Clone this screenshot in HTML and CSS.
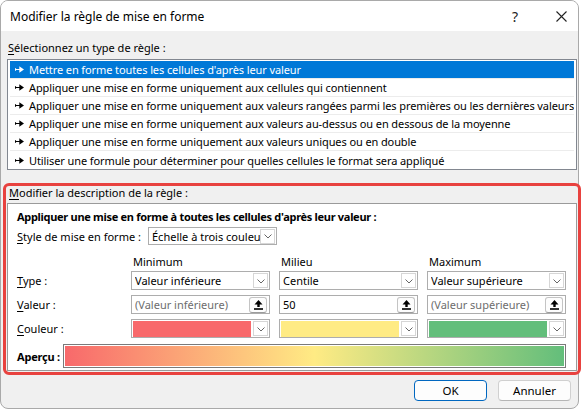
FILE: index.html
```html
<!DOCTYPE html>
<html lang="fr">
<head>
<meta charset="utf-8">
<title>Modifier la règle de mise en forme</title>
<link rel="stylesheet" href="styles.css">
</head>
<body>
<div class="window">
  <div class="titlebar">
    <span class="title">Modifier la règle de mise en forme</span>
    <span class="tb-help">?</span>
    <span class="tb-close"><svg width="11" height="11" viewBox="0 0 11 11"><path d="M0.5 0.5L10.5 10.5M10.5 0.5L0.5 10.5" stroke="#222" stroke-width="1.1" fill="none"/></svg></span>
  </div>
  <div class="content">
    <div class="label1"><u>S</u>électionnez un type de règle :</div>
    <ul class="listbox">
      <li class="rule selected"><svg class="bullet" width="9" height="7" viewBox="0 0 9 7"><path d="M0.5 2.2V4.8M0.5 3.5H5" stroke="currentColor" stroke-width="1.1" fill="none"/><path d="M4.3 0.3L9 3.5L4.3 6.7Z" fill="currentColor"/></svg>Mettre en forme toutes les cellules d'après leur valeur</li>
      <li class="rule"><svg class="bullet" width="9" height="7" viewBox="0 0 9 7"><path d="M0.5 2.2V4.8M0.5 3.5H5" stroke="currentColor" stroke-width="1.1" fill="none"/><path d="M4.3 0.3L9 3.5L4.3 6.7Z" fill="currentColor"/></svg>Appliquer une mise en forme uniquement aux cellules qui contiennent</li>
      <li class="rule"><svg class="bullet" width="9" height="7" viewBox="0 0 9 7"><path d="M0.5 2.2V4.8M0.5 3.5H5" stroke="currentColor" stroke-width="1.1" fill="none"/><path d="M4.3 0.3L9 3.5L4.3 6.7Z" fill="currentColor"/></svg>Appliquer une mise en forme uniquement aux valeurs rangées parmi les premières ou les dernières valeurs</li>
      <li class="rule"><svg class="bullet" width="9" height="7" viewBox="0 0 9 7"><path d="M0.5 2.2V4.8M0.5 3.5H5" stroke="currentColor" stroke-width="1.1" fill="none"/><path d="M4.3 0.3L9 3.5L4.3 6.7Z" fill="currentColor"/></svg>Appliquer une mise en forme uniquement aux valeurs au-dessus ou en dessous de la moyenne</li>
      <li class="rule"><svg class="bullet" width="9" height="7" viewBox="0 0 9 7"><path d="M0.5 2.2V4.8M0.5 3.5H5" stroke="currentColor" stroke-width="1.1" fill="none"/><path d="M4.3 0.3L9 3.5L4.3 6.7Z" fill="currentColor"/></svg>Appliquer une mise en forme uniquement aux valeurs uniques ou en double</li>
      <li class="rule"><svg class="bullet" width="9" height="7" viewBox="0 0 9 7"><path d="M0.5 2.2V4.8M0.5 3.5H5" stroke="currentColor" stroke-width="1.1" fill="none"/><path d="M4.3 0.3L9 3.5L4.3 6.7Z" fill="currentColor"/></svg>Utiliser une formule pour déterminer pour quelles cellules le format sera appliqué</li>
    </ul>
    <div class="desc">
      <div class="label2"><u>M</u>odifier la description de la règle :</div>
      <div class="panel">
        <div class="heading">Appliquer une mise en forme à toutes les cellules d'après leur valeur :</div>
        <div class="style-row">
          <span class="style-label"><u>S</u>tyle de mise en forme :</span>
          <div class="combo style-combo"><span class="combo-text">Échelle à trois couleurs</span><span class="arrow-btn"><svg width="8" height="5" viewBox="0 0 8 5"><path d="M0.5 0.5L4 4L7.5 0.5" stroke="#666" fill="none"/></svg></span></div>
        </div>
        <div class="grid">
          <span></span>
          <span class="col-head">Minimum</span>
          <span class="col-head">Milieu</span>
          <span class="col-head">Maximum</span>

          <span class="row-label"><u>T</u>ype :</span>
          <div class="combo"><span class="combo-text">Valeur inférieure</span><span class="arrow-btn"><svg width="8" height="5" viewBox="0 0 8 5"><path d="M0.5 0.5L4 4L7.5 0.5" stroke="#666" fill="none"/></svg></span></div>
          <div class="combo"><span class="combo-text">Centile</span><span class="arrow-btn"><svg width="8" height="5" viewBox="0 0 8 5"><path d="M0.5 0.5L4 4L7.5 0.5" stroke="#666" fill="none"/></svg></span></div>
          <div class="combo"><span class="combo-text">Valeur supérieure</span><span class="arrow-btn"><svg width="8" height="5" viewBox="0 0 8 5"><path d="M0.5 0.5L4 4L7.5 0.5" stroke="#666" fill="none"/></svg></span></div>

          <span class="row-label"><u>V</u>aleur :</span>
          <div class="combo"><span class="combo-text placeholder">(Valeur inférieure)</span><span class="ref-btn"><svg width="9" height="10" viewBox="0 0 9 10"><path d="M4.5 0L8.5 4.5H5.7V7H3.3V4.5H0.5Z" fill="#000"/><rect x="0" y="8.2" width="9" height="1.6" fill="#000"/></svg></span></div>
          <div class="combo"><span class="combo-text">50</span><span class="ref-btn"><svg width="9" height="10" viewBox="0 0 9 10"><path d="M4.5 0L8.5 4.5H5.7V7H3.3V4.5H0.5Z" fill="#000"/><rect x="0" y="8.2" width="9" height="1.6" fill="#000"/></svg></span></div>
          <div class="combo"><span class="combo-text placeholder">(Valeur supérieure)</span><span class="ref-btn"><svg width="9" height="10" viewBox="0 0 9 10"><path d="M4.5 0L8.5 4.5H5.7V7H3.3V4.5H0.5Z" fill="#000"/><rect x="0" y="8.2" width="9" height="1.6" fill="#000"/></svg></span></div>

          <span class="row-label"><u>C</u>ouleur :</span>
          <div class="combo color-combo"><span class="swatch red"></span><span class="arrow-btn"><svg width="8" height="5" viewBox="0 0 8 5"><path d="M0.5 0.5L4 4L7.5 0.5" stroke="#666" fill="none"/></svg></span></div>
          <div class="combo color-combo"><span class="swatch yellow"></span><span class="arrow-btn"><svg width="8" height="5" viewBox="0 0 8 5"><path d="M0.5 0.5L4 4L7.5 0.5" stroke="#666" fill="none"/></svg></span></div>
          <div class="combo color-combo"><span class="swatch green"></span><span class="arrow-btn"><svg width="8" height="5" viewBox="0 0 8 5"><path d="M0.5 0.5L4 4L7.5 0.5" stroke="#666" fill="none"/></svg></span></div>
        </div>
        <div class="preview-row">
          <span class="preview-label">Aperçu :</span>
          <div class="preview-bar"><div class="gradient"></div></div>
        </div>
      </div>
    </div>
    <div class="buttons">
      <button class="btn default">OK</button>
      <button class="btn">Annuler</button>
    </div>
  </div>
</div>
</body>
</html>
```
FILE: styles.css
```css
* { box-sizing: border-box; }
html, body { margin: 0; padding: 0; background: #ffffff; }
body {
  font-family: "Noto Sans", "Open Sans", sans-serif;
  font-size: 11px;
  color: #000;
}
u { text-decoration: underline; text-underline-offset: 2px; }

.window {
  width: 579px;
  height: 409px;
  border: 1px solid #a9a9a9;
  border-radius: 8px;
  background: #f0f0f0;
  display: flex;
  flex-direction: column;
  overflow: visible;
}

.titlebar {
  height: 30px;
  flex: none;
  background: #ffffff;
  border-radius: 7px 7px 0 0;
  display: flex;
  align-items: center;
  padding-left: 9px;
}
.title { flex: 1; font-size: 12px; }
.tb-help { font-size: 14px; width: 14px; text-align: center; margin-right: 34px; color: #222; }
.tb-close { width: 11px; height: 11px; display: flex; margin-right: 11px; }

.content { flex: 1; display: flex; flex-direction: column; min-height: 0; }

.label1 {
  margin-top: 9px;
  padding-left: 7px;
  line-height: 16px;
  height: 16px;
}

.listbox {
  list-style: none;
  margin: 3px 0 0 6px;
  width: 570px;
  padding: 1px 2px 0 2px;
  border: 1px solid #828790;
  background: #fff;
  flex: none;
}
.rule {
  height: 18px;
  line-height: 17px;
  border-bottom: 1px solid #ececec;
  white-space: nowrap;
  overflow: hidden;
  display: flex;
  align-items: center;
  letter-spacing: -0.1px;
}
.rule:last-child { border-bottom: none; }
.rule.selected { background: #0078d7; color: #fff; background-clip: content-box; }
.bullet { flex: none; margin: 0 5px 0 5px; }

.desc {
  margin: 13px 0 0 2px;
  width: 578px;
  border: 3px solid #e8423f;
  border-radius: 6px;
  padding: 0 1px 1px 1px;
  flex: none;
}
.label2 {
  line-height: 14px;
  height: 14px;
  padding-left: 2px;
}
.panel {
  margin-top: 3px;
  width: 570px;
  background: #fff;
  border: 1px solid #9a9a9a;
  padding: 5px 0 2px 9px;
}
.heading {
  font-weight: bold;
  line-height: 16px;
  height: 16px;
  white-space: nowrap;
  letter-spacing: -0.3px;
}

.style-row { display: flex; align-items: center; margin-top: 2px; height: 18px; }
.style-label { width: 131px; flex: none; white-space: nowrap; }
.combo {
  display: flex;
  align-items: center;
  background: #fff;
  border: 1px solid #adadad;
  height: 19px;
  padding: 0 1px 0 3px;
  overflow: hidden;
}
.style-combo { width: 129px; height: 18px; }
.combo-text { flex: 1; white-space: nowrap; overflow: hidden; line-height: 17px; }
.placeholder { color: #6d6d6d; }
.arrow-btn {
  flex: none;
  width: 15px;
  height: 15px;
  border: 1px solid #d6d6d6;
  display: flex;
  align-items: center;
  justify-content: center;
  padding-top: 1px;
}
.ref-btn {
  flex: none;
  width: 18px;
  height: 16px;
  border: 1px solid #c4c4c4;
  border-bottom-color: #9c9c9c;
  border-radius: 3px;
  display: flex;
  align-items: center;
  justify-content: center;
  margin-right: 1px;
  background: #fdfdfd;
}

.grid {
  margin-top: 9px;
  display: grid;
  grid-template-columns: 105px 139px 139px 139px;
  grid-template-rows: 17px 19px 24px 24px;
  column-gap: 9px;
  align-items: end;
}
.col-head { line-height: 16px; padding-left: 2px; align-self: start; }
.row-label { line-height: 19px; white-space: nowrap; }
.color-combo { padding-left: 1px; }
.swatch { flex: 1; align-self: stretch; margin: 1px 2px 0 0; }
.swatch.red { background: #f8696b; }
.swatch.yellow { background: #ffeb84; }
.swatch.green { background: #63be7b; }

.preview-row { display: flex; align-items: center; margin-top: 6px; }
.preview-label { width: 46px; flex: none; font-weight: bold; white-space: nowrap; letter-spacing: -0.2px; }
.preview-bar {
  width: 503px;
  height: 24px;
  border: 1px solid #7a7a7a;
  padding: 1px;
  background: #fff;
}
.gradient {
  height: 100%;
  background: linear-gradient(to right, #f8696b 0%, #ffeb84 50%, #63be7b 100%);
}

.buttons {
  display: flex;
  justify-content: flex-end;
  gap: 11px;
  margin-top: 5px;
  padding-right: 7px;
}
.btn {
  font-family: inherit;
  font-size: 11.5px;
  width: 73px;
  height: 21px;
  padding: 0;
  background: #fdfdfd;
  border: 1px solid #d0d0d0;
  border-bottom-color: #b5b5b5;
  border-radius: 4px;
  color: #000;
}
.btn.default { border-color: #0067c0; }
```
